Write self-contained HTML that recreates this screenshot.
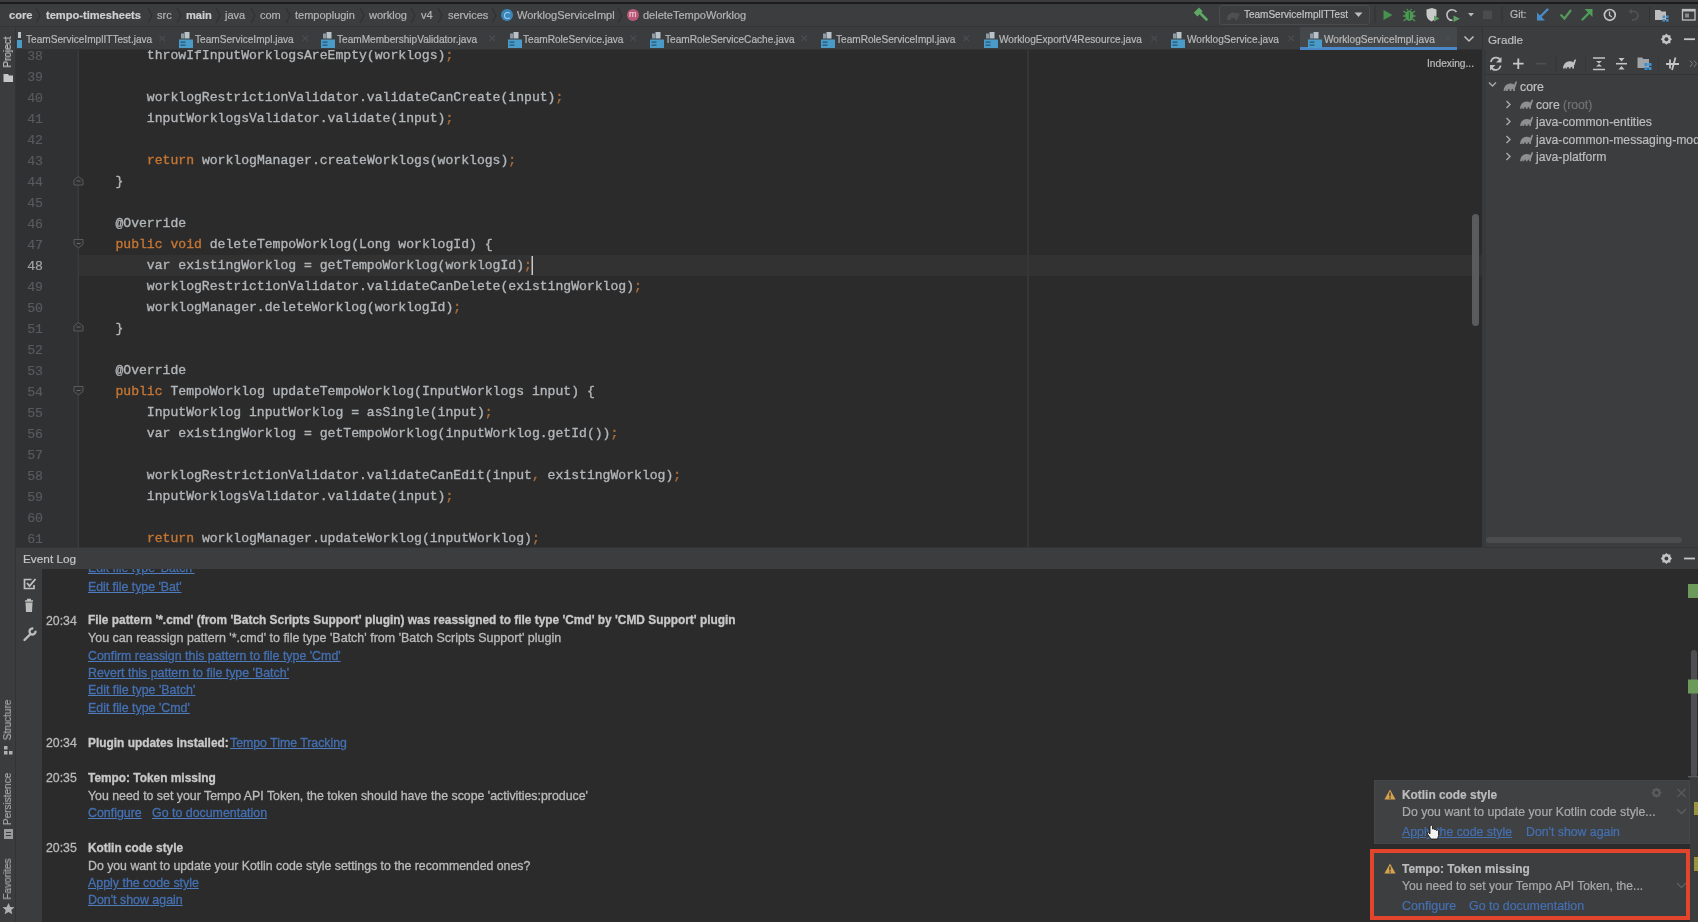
<!DOCTYPE html><html><head><meta charset="utf-8"><style>
*{margin:0;padding:0;box-sizing:border-box}
html,body{width:1698px;height:922px;overflow:hidden;background:#2b2b2b;font-family:"Liberation Sans",sans-serif;-webkit-font-smoothing:antialiased}
.t,.code{will-change:transform}
.a{position:absolute}
.t{position:absolute;white-space:pre;line-height:1;-webkit-text-stroke:0.2px currentColor}
#top{left:0;top:0;width:1698px;height:4px;background:#1c1c1d;border-top:2px solid #3c3c3e}
#nav{left:0;top:4px;width:1698px;height:23px;background:#3c3d3f;border-bottom:1px solid #343537}
#tabs{left:16px;top:27px;width:1466px;height:23px;background:#3b3c3e;border-bottom:1px solid #323335}
#lstripe{left:0;top:27px;width:16px;height:895px;background:#3b3c3e;border-right:1px solid #333436}
#gutter{left:16px;top:50px;width:62px;height:498px;background:#303133}
#editor{left:78px;top:50px;width:1404px;height:498px;background:#2b2b2b}
#gradle{left:1482px;top:27px;width:216px;height:521px;background:#3c3d3f;border-left:1px solid #333436}
#elhead{left:16px;top:547px;width:1682px;height:23px;background:#3c3d3f;border-top:1px solid #333436}
#eltool{left:16px;top:569px;width:26px;height:353px;background:#3b3c3e}
#elcontent{left:42px;top:569px;width:1656px;height:353px;background:#2b2b2b}
.code{font-family:"Liberation Mono",monospace;font-size:13.1px;color:#b3b6b9;-webkit-text-stroke:0.35px currentColor}
.ln{font-family:"Liberation Mono",monospace;font-size:13.2px;color:#5d5f62;text-align:right;width:40px}
.kw{color:#c57634}
.sc{color:#a86c3c}
.ui{font-size:11px;color:#bbbbbb}
</style></head><body>
<div id="top" class="a"></div>
<div id="nav" class="a"></div>
<div id="tabs" class="a"></div>
<div id="lstripe" class="a"></div>
<div id="gutter" class="a"></div>
<div id="editor" class="a"></div>
<div id="gradle" class="a"></div>
<div id="elhead" class="a"></div>
<div id="eltool" class="a"></div>
<div id="elcontent" class="a"></div>
<div class="a" style="left:78px;top:255px;width:1404px;height:20.5px;background:#323232"></div>
<div class="a" style="left:1027px;top:50px;width:2px;height:498px;background:#363637"></div>
<div class="a" style="left:16px;top:50px;width:1466px;height:498px;overflow:hidden">
<div class="t ln" style="left:-13px;top:-0.5px;color:#585a5d">38</div>
<div class="t code" style="left:68px;top:-1px">        throwIfInputWorklogsAreEmpty(worklogs)<span class="sc">;</span></div>
<div class="t ln" style="left:-13px;top:20.5px;color:#585a5d">39</div>
<div class="t ln" style="left:-13px;top:41.5px;color:#585a5d">40</div>
<div class="t code" style="left:68px;top:41px">        worklogRestrictionValidator.validateCanCreate(input)<span class="sc">;</span></div>
<div class="t ln" style="left:-13px;top:62.5px;color:#585a5d">41</div>
<div class="t code" style="left:68px;top:62px">        inputWorklogsValidator.validate(input)<span class="sc">;</span></div>
<div class="t ln" style="left:-13px;top:83.5px;color:#585a5d">42</div>
<div class="t ln" style="left:-13px;top:104.5px;color:#585a5d">43</div>
<div class="t code" style="left:68px;top:104px">        <span class="kw">return</span> worklogManager.createWorklogs(worklogs)<span class="sc">;</span></div>
<div class="t ln" style="left:-13px;top:125.5px;color:#585a5d">44</div>
<div class="t code" style="left:68px;top:125px">    }</div>
<div class="t ln" style="left:-13px;top:146.5px;color:#585a5d">45</div>
<div class="t ln" style="left:-13px;top:167.5px;color:#585a5d">46</div>
<div class="t code" style="left:68px;top:167px">    @Override</div>
<div class="t ln" style="left:-13px;top:188.5px;color:#585a5d">47</div>
<div class="t code" style="left:68px;top:188px">    <span class="kw">public void</span> deleteTempoWorklog(Long worklogId) {</div>
<div class="t ln" style="left:-13px;top:209.5px;color:#a4a3a3">48</div>
<div class="t code" style="left:68px;top:209px">        var existingWorklog = getTempoWorklog(worklogId)<span class="sc">;</span></div>
<div class="t ln" style="left:-13px;top:230.5px;color:#585a5d">49</div>
<div class="t code" style="left:68px;top:230px">        worklogRestrictionValidator.validateCanDelete(existingWorklog)<span class="sc">;</span></div>
<div class="t ln" style="left:-13px;top:251.5px;color:#585a5d">50</div>
<div class="t code" style="left:68px;top:251px">        worklogManager.deleteWorklog(worklogId)<span class="sc">;</span></div>
<div class="t ln" style="left:-13px;top:272.5px;color:#585a5d">51</div>
<div class="t code" style="left:68px;top:272px">    }</div>
<div class="t ln" style="left:-13px;top:293.5px;color:#585a5d">52</div>
<div class="t ln" style="left:-13px;top:314.5px;color:#585a5d">53</div>
<div class="t code" style="left:68px;top:314px">    @Override</div>
<div class="t ln" style="left:-13px;top:335.5px;color:#585a5d">54</div>
<div class="t code" style="left:68px;top:335px">    <span class="kw">public</span> TempoWorklog updateTempoWorklog(InputWorklogs input) {</div>
<div class="t ln" style="left:-13px;top:356.5px;color:#585a5d">55</div>
<div class="t code" style="left:68px;top:356px">        InputWorklog inputWorklog = asSingle(input)<span class="sc">;</span></div>
<div class="t ln" style="left:-13px;top:377.5px;color:#585a5d">56</div>
<div class="t code" style="left:68px;top:377px">        var existingWorklog = getTempoWorklog(inputWorklog.getId())<span class="sc">;</span></div>
<div class="t ln" style="left:-13px;top:398.5px;color:#585a5d">57</div>
<div class="t ln" style="left:-13px;top:419.5px;color:#585a5d">58</div>
<div class="t code" style="left:68px;top:419px">        worklogRestrictionValidator.validateCanEdit(input<span class="sc">,</span> existingWorklog)<span class="sc">;</span></div>
<div class="t ln" style="left:-13px;top:440.5px;color:#585a5d">59</div>
<div class="t code" style="left:68px;top:440px">        inputWorklogsValidator.validate(input)<span class="sc">;</span></div>
<div class="t ln" style="left:-13px;top:461.5px;color:#585a5d">60</div>
<div class="t ln" style="left:-13px;top:482.5px;color:#585a5d">61</div>
<div class="t code" style="left:68px;top:482px">        <span class="kw">return</span> worklogManager.updateWorklog(inputWorklog)<span class="sc">;</span></div>
</div>
<div class="t" style="left:8.5px;top:9.62px;font-size:11.1px;color:#cfcfcf;font-weight:bold;">core</div>
<div class="t" style="left:45.5px;top:9.62px;font-size:11.1px;color:#cfcfcf;font-weight:bold;">tempo-timesheets</div>
<div class="t" style="left:156.5px;top:9.68px;font-size:11.0px;color:#b4b4b4;">src</div>
<div class="t" style="left:185.5px;top:9.62px;font-size:11.1px;color:#cfcfcf;font-weight:bold;">main</div>
<div class="t" style="left:224.5px;top:9.68px;font-size:11.0px;color:#b4b4b4;">java</div>
<div class="t" style="left:259.5px;top:9.68px;font-size:11.0px;color:#b4b4b4;">com</div>
<div class="t" style="left:294.5px;top:9.68px;font-size:11.0px;color:#b4b4b4;">tempoplugin</div>
<div class="t" style="left:368.5px;top:9.68px;font-size:11.0px;color:#b4b4b4;">worklog</div>
<div class="t" style="left:420.5px;top:9.68px;font-size:11.0px;color:#b4b4b4;">v4</div>
<div class="t" style="left:447.5px;top:9.68px;font-size:11.0px;color:#b4b4b4;">services</div>
<div class="t" style="left:516.5px;top:9.68px;font-size:11.0px;color:#b4b4b4;">WorklogServiceImpl</div>
<div class="t" style="left:642.5px;top:9.68px;font-size:11.0px;color:#b4b4b4;">deleteTempoWorklog</div>
<svg class="a" style="left:35px;top:7px" width="6" height="17"><path d="M1 1 L5 8.5 L1 16" stroke="#303133" stroke-width="1.2" fill="none"/></svg>
<svg class="a" style="left:147px;top:7px" width="6" height="17"><path d="M1 1 L5 8.5 L1 16" stroke="#303133" stroke-width="1.2" fill="none"/></svg>
<svg class="a" style="left:176px;top:7px" width="6" height="17"><path d="M1 1 L5 8.5 L1 16" stroke="#303133" stroke-width="1.2" fill="none"/></svg>
<svg class="a" style="left:215px;top:7px" width="6" height="17"><path d="M1 1 L5 8.5 L1 16" stroke="#303133" stroke-width="1.2" fill="none"/></svg>
<svg class="a" style="left:250px;top:7px" width="6" height="17"><path d="M1 1 L5 8.5 L1 16" stroke="#303133" stroke-width="1.2" fill="none"/></svg>
<svg class="a" style="left:285px;top:7px" width="6" height="17"><path d="M1 1 L5 8.5 L1 16" stroke="#303133" stroke-width="1.2" fill="none"/></svg>
<svg class="a" style="left:359px;top:7px" width="6" height="17"><path d="M1 1 L5 8.5 L1 16" stroke="#303133" stroke-width="1.2" fill="none"/></svg>
<svg class="a" style="left:410px;top:7px" width="6" height="17"><path d="M1 1 L5 8.5 L1 16" stroke="#303133" stroke-width="1.2" fill="none"/></svg>
<svg class="a" style="left:437px;top:7px" width="6" height="17"><path d="M1 1 L5 8.5 L1 16" stroke="#303133" stroke-width="1.2" fill="none"/></svg>
<svg class="a" style="left:491px;top:7px" width="6" height="17"><path d="M1 1 L5 8.5 L1 16" stroke="#303133" stroke-width="1.2" fill="none"/></svg>
<svg class="a" style="left:617px;top:7px" width="6" height="17"><path d="M1 1 L5 8.5 L1 16" stroke="#303133" stroke-width="1.2" fill="none"/></svg>
<div class="a" style="left:501px;top:9px;width:12px;height:12px;border-radius:50%;background:#3a86b8"></div>
<div class="a" style="left:503.5px;top:11.5px;width:7px;height:7px;border-radius:50%;border:1.6px solid #9fd0ee;border-right-color:transparent"></div>
<div class="a" style="left:627px;top:9px;width:12px;height:12px;border-radius:50%;background:#b95777"></div>
<div class="t" style="left:629.3px;top:10.2px;font-size:9px;color:#f0c8d4">m</div>
<div class="a" style="left:1300px;top:27px;width:157px;height:21px;background:#45484b"></div>
<div class="a" style="left:1300px;top:47px;width:157px;height:3px;background:#4a87c6"></div>
<div class="t" style="left:26px;top:35.24px;font-size:10.1px;color:#b9b9b9;">TeamServiceImplITTest.java</div>
<div class="t" style="left:158px;top:34px;font-size:10px;color:#4c4e51">&#x2715;</div>
<svg class="a" style="left:178px;top:31px" width="16" height="18" viewBox="0 0 16 18"><rect x="3" y="2.5" width="3" height="5" fill="#8d9aa3"/><rect x="6.5" y="1" width="5" height="6.5" fill="#b9c2c8"/><rect x="1" y="8.5" width="14" height="8.5" fill="#4b9bc8"/><rect x="2.5" y="10.5" width="5" height="1.3" fill="#235a7a"/><rect x="2.5" y="13.5" width="5" height="1.3" fill="#235a7a"/></svg>
<div class="t" style="left:195px;top:35.24px;font-size:10.1px;color:#b9b9b9;">TeamServiceImpl.java</div>
<div class="t" style="left:301px;top:34px;font-size:10px;color:#4c4e51">&#x2715;</div>
<svg class="a" style="left:320px;top:31px" width="16" height="18" viewBox="0 0 16 18"><rect x="3" y="2.5" width="3" height="5" fill="#8d9aa3"/><rect x="6.5" y="1" width="5" height="6.5" fill="#b9c2c8"/><rect x="1" y="8.5" width="14" height="8.5" fill="#4b9bc8"/><rect x="2.5" y="10.5" width="5" height="1.3" fill="#235a7a"/><rect x="2.5" y="13.5" width="5" height="1.3" fill="#235a7a"/></svg>
<div class="t" style="left:337px;top:35.24px;font-size:10.1px;color:#b9b9b9;">TeamMembershipValidator.java</div>
<div class="t" style="left:488px;top:34px;font-size:10px;color:#4c4e51">&#x2715;</div>
<svg class="a" style="left:507px;top:31px" width="16" height="18" viewBox="0 0 16 18"><rect x="3" y="2.5" width="3" height="5" fill="#8d9aa3"/><rect x="6.5" y="1" width="5" height="6.5" fill="#b9c2c8"/><rect x="1" y="8.5" width="14" height="8.5" fill="#4b9bc8"/><rect x="2.5" y="10.5" width="5" height="1.3" fill="#235a7a"/><rect x="2.5" y="13.5" width="5" height="1.3" fill="#235a7a"/></svg>
<div class="t" style="left:523px;top:35.24px;font-size:10.1px;color:#b9b9b9;">TeamRoleService.java</div>
<div class="t" style="left:629px;top:34px;font-size:10px;color:#4c4e51">&#x2715;</div>
<svg class="a" style="left:649px;top:31px" width="16" height="18" viewBox="0 0 16 18"><rect x="3" y="2.5" width="3" height="5" fill="#8d9aa3"/><rect x="6.5" y="1" width="5" height="6.5" fill="#b9c2c8"/><rect x="1" y="8.5" width="14" height="8.5" fill="#4b9bc8"/><rect x="2.5" y="10.5" width="5" height="1.3" fill="#235a7a"/><rect x="2.5" y="13.5" width="5" height="1.3" fill="#235a7a"/></svg>
<div class="t" style="left:665px;top:35.24px;font-size:10.1px;color:#b9b9b9;">TeamRoleServiceCache.java</div>
<div class="t" style="left:800px;top:34px;font-size:10px;color:#4c4e51">&#x2715;</div>
<svg class="a" style="left:820px;top:31px" width="16" height="18" viewBox="0 0 16 18"><rect x="3" y="2.5" width="3" height="5" fill="#8d9aa3"/><rect x="6.5" y="1" width="5" height="6.5" fill="#b9c2c8"/><rect x="1" y="8.5" width="14" height="8.5" fill="#4b9bc8"/><rect x="2.5" y="10.5" width="5" height="1.3" fill="#235a7a"/><rect x="2.5" y="13.5" width="5" height="1.3" fill="#235a7a"/></svg>
<div class="t" style="left:836px;top:35.24px;font-size:10.1px;color:#b9b9b9;">TeamRoleServiceImpl.java</div>
<div class="t" style="left:962px;top:34px;font-size:10px;color:#4c4e51">&#x2715;</div>
<svg class="a" style="left:983px;top:31px" width="16" height="18" viewBox="0 0 16 18"><rect x="3" y="2.5" width="3" height="5" fill="#8d9aa3"/><rect x="6.5" y="1" width="5" height="6.5" fill="#b9c2c8"/><rect x="1" y="8.5" width="14" height="8.5" fill="#4b9bc8"/><rect x="2.5" y="10.5" width="5" height="1.3" fill="#235a7a"/><rect x="2.5" y="13.5" width="5" height="1.3" fill="#235a7a"/></svg>
<div class="t" style="left:999px;top:35.24px;font-size:10.1px;color:#b9b9b9;">WorklogExportV4Resource.java</div>
<div class="t" style="left:1150px;top:34px;font-size:10px;color:#4c4e51">&#x2715;</div>
<svg class="a" style="left:1170px;top:31px" width="16" height="18" viewBox="0 0 16 18"><rect x="3" y="2.5" width="3" height="5" fill="#8d9aa3"/><rect x="6.5" y="1" width="5" height="6.5" fill="#b9c2c8"/><rect x="1" y="8.5" width="14" height="8.5" fill="#4b9bc8"/><rect x="2.5" y="10.5" width="5" height="1.3" fill="#235a7a"/><rect x="2.5" y="13.5" width="5" height="1.3" fill="#235a7a"/></svg>
<div class="t" style="left:1187px;top:35.24px;font-size:10.1px;color:#b9b9b9;">WorklogService.java</div>
<div class="t" style="left:1287px;top:34px;font-size:10px;color:#4c4e51">&#x2715;</div>
<svg class="a" style="left:1307px;top:31px" width="16" height="18" viewBox="0 0 16 18"><rect x="3" y="2.5" width="3" height="5" fill="#8d9aa3"/><rect x="6.5" y="1" width="5" height="6.5" fill="#b9c2c8"/><rect x="1" y="8.5" width="14" height="8.5" fill="#4b9bc8"/><rect x="2.5" y="10.5" width="5" height="1.3" fill="#235a7a"/><rect x="2.5" y="13.5" width="5" height="1.3" fill="#235a7a"/></svg>
<div class="t" style="left:1324px;top:35.24px;font-size:10.1px;color:#b9b9b9;">WorklogServiceImpl.java</div>
<div class="t" style="left:1444px;top:34px;font-size:10px;color:#4c4e51">&#x2715;</div>
<div class="a" style="left:18px;top:32px;width:3px;height:6px;background:#b9c2c8"></div><div class="a" style="left:17px;top:39.5px;width:5px;height:8.5px;background:#4b9bc8"></div>
<svg class="a" style="left:1463px;top:34px" width="12" height="10"><path d="M1.5 2.5 L6 7 L10.5 2.5" stroke="#c0c0c0" stroke-width="1.5" fill="none"/></svg>
<div class="a" style="left:1219px;top:5px;width:151px;height:20px;border:1px solid #4a4b4d;border-radius:3px;background:#3d3e40"></div>
<div class="t" style="left:1243.5px;top:9.80px;font-size:10.0px;color:#c4c4c4;">TeamServiceImplITTest</div>
<svg class="a" style="left:1354px;top:12px" width="9" height="6"><path d="M0.5 0.5 L8.5 0.5 L4.5 5z" fill="#bdbdbd"/></svg>
<div class="t" style="left:1510px;top:9.49px;font-size:10.5px;color:#b8b8b8;">Git:</div>
<div class="t" style="left:1488px;top:34.25px;font-size:11.7px;color:#bdbdbd;">Gradle</div>
<div class="a" style="left:1486px;top:74px;width:212px;height:1px;background:#323335"></div>
<div class="a" style="left:1482px;top:50px;width:4px;height:498px;background:#38393b"></div>
<svg class="a" style="left:1488px;top:81px" width="9" height="7"><path d="M1 1.5 L4.5 5 L8 1.5" stroke="#aaaaaa" stroke-width="1.4" fill="none"/></svg>
<div class="t" style="left:1520px;top:81.17px;font-size:12.3px;color:#c0c0c0;">core</div>
<svg class="a" style="left:1505px;top:99.8px" width="7" height="9"><path d="M1.5 1 L5 4.5 L1.5 8" stroke="#aaaaaa" stroke-width="1.4" fill="none"/></svg>
<div class="t" style="left:1536px;top:98.74px;font-size:12.2px;color:#bdbdbd;">core <span style="color:#727375">(root)</span></div>
<svg class="a" style="left:1505px;top:117.1px" width="7" height="9"><path d="M1.5 1 L5 4.5 L1.5 8" stroke="#aaaaaa" stroke-width="1.4" fill="none"/></svg>
<div class="t" style="left:1536px;top:116.04px;font-size:12.2px;color:#bdbdbd;">java-common-entities</div>
<svg class="a" style="left:1505px;top:135.0px" width="7" height="9"><path d="M1.5 1 L5 4.5 L1.5 8" stroke="#aaaaaa" stroke-width="1.4" fill="none"/></svg>
<div class="t" style="left:1536px;top:133.94px;font-size:12.2px;color:#bdbdbd;">java-common-messaging-module</div>
<svg class="a" style="left:1505px;top:152.3px" width="7" height="9"><path d="M1.5 1 L5 4.5 L1.5 8" stroke="#aaaaaa" stroke-width="1.4" fill="none"/></svg>
<div class="t" style="left:1536px;top:151.24px;font-size:12.2px;color:#bdbdbd;">java-platform</div>
<div class="a" style="left:1486px;top:537px;width:196px;height:6px;border-radius:3px;background:#4b4c4e"></div>
<div class="t" style="left:1427px;top:59.18px;font-size:10.2px;color:#bdbdbd;">Indexing...</div>
<div class="a" style="left:1472px;top:214px;width:7px;height:112px;border-radius:4px;background:#5a5b5d"></div>
<div class="t" style="left:22.5px;top:554.28px;font-size:11.8px;color:#c5c5c5;">Event Log</div>
<div class="a" style="left:42px;top:569px;width:1646px;height:353px;overflow:hidden">
<div class="t" style="left:46px;top:-7.23px;font-size:12.3px;color:#4470b2;-webkit-text-stroke:0.3px currentColor;text-decoration:underline;text-underline-offset:1px;text-decoration-color:#4f7cbc;">Edit file type 'Batch'</div>
<div class="t" style="left:46px;top:11.77px;font-size:12.3px;color:#4470b2;-webkit-text-stroke:0.3px currentColor;text-decoration:underline;text-underline-offset:1px;text-decoration-color:#4f7cbc;">Edit file type 'Bat'</div>
<div class="t" style="left:4px;top:45.87px;font-size:12.3px;color:#b9b9b9;-webkit-text-stroke:0.3px currentColor;">20:34</div>
<div class="t" style="left:46px;top:46.12px;font-size:11.9px;color:#c8c8c8;-webkit-text-stroke:0.3px currentColor;font-weight:bold;">File pattern '*.cmd' (from 'Batch Scripts Support' plugin) was reassigned to file type 'Cmd' by 'CMD Support' plugin</div>
<div class="t" style="left:46px;top:63.25px;font-size:12.5px;color:#bbbbbb;-webkit-text-stroke:0.3px currentColor;">You can reassign pattern '*.cmd' to file type 'Batch' from 'Batch Scripts Support' plugin</div>
<div class="t" style="left:46px;top:81.21px;font-size:12.4px;color:#4470b2;-webkit-text-stroke:0.3px currentColor;text-decoration:underline;text-underline-offset:1px;text-decoration-color:#4f7cbc;">Confirm reassign this pattern to file type 'Cmd'</div>
<div class="t" style="left:46px;top:98.21px;font-size:12.4px;color:#4470b2;-webkit-text-stroke:0.3px currentColor;text-decoration:underline;text-underline-offset:1px;text-decoration-color:#4f7cbc;">Revert this pattern to file type 'Batch'</div>
<div class="t" style="left:46px;top:115.21px;font-size:12.4px;color:#4470b2;-webkit-text-stroke:0.3px currentColor;text-decoration:underline;text-underline-offset:1px;text-decoration-color:#4f7cbc;">Edit file type 'Batch'</div>
<div class="t" style="left:46px;top:132.71px;font-size:12.4px;color:#4470b2;-webkit-text-stroke:0.3px currentColor;text-decoration:underline;text-underline-offset:1px;text-decoration-color:#4f7cbc;">Edit file type 'Cmd'</div>
<div class="t" style="left:4px;top:168.37px;font-size:12.3px;color:#b9b9b9;-webkit-text-stroke:0.3px currentColor;">20:34</div>
<div class="t" style="left:46px;top:168.62px;font-size:11.9px;color:#c8c8c8;-webkit-text-stroke:0.3px currentColor;font-weight:bold;">Plugin updates installed: </div>
<div class="t" style="left:187.5px;top:167.77px;font-size:12.3px;color:#4470b2;-webkit-text-stroke:0.3px currentColor;text-decoration:underline;text-underline-offset:1px;text-decoration-color:#4f7cbc;">Tempo Time Tracking</div>
<div class="t" style="left:4px;top:203.37px;font-size:12.3px;color:#b9b9b9;-webkit-text-stroke:0.3px currentColor;">20:35</div>
<div class="t" style="left:46px;top:203.62px;font-size:11.9px;color:#c8c8c8;-webkit-text-stroke:0.3px currentColor;font-weight:bold;">Tempo: Token missing</div>
<div class="t" style="left:46px;top:220.84px;font-size:12.35px;color:#bbbbbb;-webkit-text-stroke:0.3px currentColor;">You need to set your Tempo API Token, the token should have the scope 'activities:produce'</div>
<div class="t" style="left:46px;top:237.71px;font-size:12.4px;color:#4470b2;-webkit-text-stroke:0.3px currentColor;text-decoration:underline;text-underline-offset:1px;text-decoration-color:#4f7cbc;">Configure</div>
<div class="t" style="left:109.5px;top:237.71px;font-size:12.4px;color:#4470b2;-webkit-text-stroke:0.3px currentColor;text-decoration:underline;text-underline-offset:1px;text-decoration-color:#4f7cbc;">Go to documentation</div>
<div class="t" style="left:4px;top:273.37px;font-size:12.3px;color:#b9b9b9;-webkit-text-stroke:0.3px currentColor;">20:35</div>
<div class="t" style="left:46px;top:273.62px;font-size:11.9px;color:#c8c8c8;-webkit-text-stroke:0.3px currentColor;font-weight:bold;">Kotlin code style</div>
<div class="t" style="left:46px;top:290.87px;font-size:12.3px;color:#bbbbbb;-webkit-text-stroke:0.3px currentColor;">Do you want to update your Kotlin code style settings to the recommended ones?</div>
<div class="t" style="left:46px;top:307.71px;font-size:12.4px;color:#4470b2;-webkit-text-stroke:0.3px currentColor;text-decoration:underline;text-underline-offset:1px;text-decoration-color:#4f7cbc;">Apply the code style</div>
<div class="t" style="left:46px;top:325.21px;font-size:12.4px;color:#4470b2;-webkit-text-stroke:0.3px currentColor;text-decoration:underline;text-underline-offset:1px;text-decoration-color:#4f7cbc;">Don't show again</div>
</div>
<div class="a" style="left:1374px;top:780px;width:316px;height:64px;background:#404143;border:1px solid #454648"></div>
<div class="a" style="left:1370px;top:849px;width:320px;height:71px;border:4px solid #e2452b;background:#3d3e40"></div>
<svg class="a" style="left:1384px;top:789px" width="12" height="11" viewBox="0 0 12 11"><path d="M6 0.5 L11.6 10.5 L0.4 10.5z" fill="#d6a24a"/><rect x="5.3" y="3.5" width="1.4" height="4" fill="#3a3a3a"/><rect x="5.3" y="8.3" width="1.4" height="1.3" fill="#3a3a3a"/></svg>
<svg class="a" style="left:1384px;top:863px" width="12" height="11" viewBox="0 0 12 11"><path d="M6 0.5 L11.6 10.5 L0.4 10.5z" fill="#d6a24a"/><rect x="5.3" y="3.5" width="1.4" height="4" fill="#3a3a3a"/><rect x="5.3" y="8.3" width="1.4" height="1.3" fill="#3a3a3a"/></svg>
<div class="t" style="left:1402px;top:789.62px;font-size:11.9px;color:#bcbcbc;font-weight:bold;">Kotlin code style</div>
<div class="t" style="left:1402px;top:806.37px;font-size:12.3px;color:#aaaaaa;">Do you want to update your Kotlin code style...</div>
<div class="t" style="left:1402px;top:825.87px;font-size:12.3px;color:#4470b2;text-decoration:underline;">Apply the code style</div>
<div class="t" style="left:1526px;top:825.87px;font-size:12.3px;color:#4470b2;">Don't show again</div>
<div class="t" style="left:1402px;top:863.62px;font-size:11.9px;color:#bcbcbc;font-weight:bold;">Tempo: Token missing</div>
<div class="t" style="left:1402px;top:880.00px;font-size:12.1px;color:#aaaaaa;">You need to set your Tempo API Token, the...</div>
<div class="t" style="left:1402px;top:899.75px;font-size:12.5px;color:#4470b2;">Configure</div>
<div class="t" style="left:1469px;top:899.81px;font-size:12.4px;color:#4470b2;">Go to documentation</div>
<svg class="a" style="left:0;top:0" width="1698" height="922"><path d="M1206.5 19.5 L1199.5 12.5" stroke="#5fa866" stroke-width="2.6" stroke-linecap="round"/><path d="M1193.8 12.8 L1199 7.6 L1202.6 11.2 L1197.4 16.4z" fill="#5fa866"/><path d="M1227 20 Q1227 13 1233 12.5 Q1237 12.5 1238 14 L1239 12 L1239.5 15 Q1238 17 1237 20 L1235 20 L1235 18 L1231 18 L1231 20z" fill="#4f5052"/><path d="M1383.5 10 L1392.5 15 L1383.5 20z" fill="#46924f"/><ellipse cx="1409.3" cy="15.6" rx="4.2" ry="5.2" fill="#4c9a54"/><path d="M1403.5 11 L1406 13 M1415 11 L1412.5 13 M1403 16 L1405.5 16 M1415.5 16 L1413 16 M1403.5 21 L1406 19 M1415 21 L1412.5 19 M1407 9 L1408 10.5 M1411.5 9 L1410.5 10.5" stroke="#4c9a54" stroke-width="1.3"/><path d="M1409.3 12 L1409.3 19" stroke="#2f5a33" stroke-width="1"/><path d="M1426.5 9.5 L1432 8 L1436.5 9.5 L1436.5 15 Q1436 19.5 1431.5 21.5 Q1427 19.5 1426.5 15z" fill="#c9c9c9"/><path d="M1432 8 L1432 21.5" stroke="#555" stroke-width="0"/><path d="M1434 15.5 L1439.5 18.5 L1434 21.5z" fill="#5e9f63"/><path d="M1456.5 12 A5.3 5.3 0 1 0 1452.5 20.3" stroke="#c0c0c0" stroke-width="1.6" fill="none"/><path d="M1453.5 15.5 L1460 18.8 L1453.5 22z" fill="#5e9f63"/><path d="M1468 13 L1474 13 L1471 16.5z" fill="#b9b9b9"/><rect x="1483" y="10.5" width="9" height="8.5" fill="#4b4c4e"/><rect x="1501.5" y="6" width="1" height="17" fill="#323335"/><rect x="1649" y="6" width="1" height="17" fill="#323335"/><rect x="1374.5" y="6" width="1" height="17" fill="#323335"/><path d="M1547.5 9.5 L1539 18" stroke="#4a8cc8" stroke-width="2.4" stroke-linecap="round"/><path d="M1537 12.5 L1537 20.5 L1545 20.5z" fill="#4a8cc8"/><path d="M1560.5 14.5 L1564.5 18.5 L1571 10" stroke="#56985c" stroke-width="2.2" fill="none"/><path d="M1582.5 19.5 L1590 12" stroke="#4f9d57" stroke-width="2.4" stroke-linecap="round"/><path d="M1584.5 9 L1592.5 9 L1592.5 17z" fill="#4f9d57"/><circle cx="1609.8" cy="14.9" r="5.4" stroke="#c4c4c4" stroke-width="1.7" fill="none"/><path d="M1609.5 11.5 L1609.5 15.2 L1611.8 17" stroke="#c4c4c4" stroke-width="1.3" fill="none"/><path d="M1630 11.5 Q1638 10.5 1638 15.5 Q1638 20 1632 20" stroke="#505153" stroke-width="1.8" fill="none"/><path d="M1628 11.5 L1632 9 L1632 14z" fill="#505153"/><path d="M1655 10 L1660 10 L1661.5 11.5 L1666 11.5 L1666 20 L1655 20z" fill="#bdbdbd"/><rect x="1662.5" y="15.5" width="2.6" height="2.6" fill="#4a8fc4"/><rect x="1666" y="15.5" width="2.6" height="2.6" fill="#4a8fc4"/><rect x="1662.5" y="19" width="2.6" height="2.6" fill="#4a8fc4"/><rect x="1666" y="19" width="2.6" height="2.6" fill="#4a8fc4"/><rect x="1682.5" y="9.5" width="12.5" height="10.5" stroke="#c0c0c0" stroke-width="1.3" fill="none"/><rect x="1682.5" y="9.5" width="12.5" height="2" fill="#c0c0c0"/><rect x="1685" y="13.5" width="4" height="4" fill="#8a8a8a"/><path d="M3.5 74 L8 74 L9 75.5 L13 75.5 L13 82 L3.5 82z" fill="#c6c6c6"/><rect x="4" y="746" width="3.5" height="3.5" fill="#b0b0b0"/><rect x="4" y="751" width="3.5" height="3.5" fill="#b0b0b0"/><rect x="9" y="751" width="3.5" height="3.5" fill="#b0b0b0"/><rect x="4" y="829" width="9" height="10" fill="#9a9a9a"/><rect x="6" y="832" width="5" height="1" fill="#3b3c3e"/><rect x="6" y="835" width="5" height="1" fill="#3b3c3e"/><path d="M8.5 903 L10.3 907 L14.5 907.3 L11.3 910 L12.3 914.2 L8.5 912 L4.7 914.2 L5.7 910 L2.5 907.3 L6.7 907z" fill="#b0b0b0"/><polygon points="1672.00,39.20 1670.44,40.87 1670.36,43.16 1668.07,43.24 1666.40,44.80 1664.73,43.24 1662.44,43.16 1662.36,40.87 1660.80,39.20 1662.36,37.53 1662.44,35.24 1664.73,35.16 1666.40,33.60 1668.07,35.16 1670.36,35.24 1670.44,37.53" fill="#c4c4c4"/><circle cx="1666.4" cy="39.2" r="1.96" fill="#3c3d3f"/><rect x="1684" y="38.3" width="11" height="1.8" fill="#c4c4c4"/><polygon points="1672.00,558.50 1670.44,560.17 1670.36,562.46 1668.07,562.54 1666.40,564.10 1664.73,562.54 1662.44,562.46 1662.36,560.17 1660.80,558.50 1662.36,556.83 1662.44,554.54 1664.73,554.46 1666.40,552.90 1668.07,554.46 1670.36,554.54 1670.44,556.83" fill="#c4c4c4"/><circle cx="1666.4" cy="558.5" r="1.96" fill="#3c3d3f"/><rect x="1684" y="557.6" width="11" height="1.8" fill="#c4c4c4"/><path d="M1500.5 60.5 A5 5 0 0 0 1491 62" stroke="#c0c0c0" stroke-width="1.8" fill="none"/><path d="M1501.5 57 L1501.5 62.5 L1496 62.5z" fill="#c0c0c0"/><path d="M1491 67 A5 5 0 0 0 1500.5 65.5" stroke="#c0c0c0" stroke-width="1.8" fill="none"/><path d="M1490 70.5 L1490 65 L1495.5 65z" fill="#c0c0c0"/><path d="M1513 63.7 L1523.6 63.7 M1518.3 58.5 L1518.3 69" stroke="#c8c8c8" stroke-width="1.8"/><path d="M1536 63.7 L1546 63.7" stroke="#4e4f51" stroke-width="1.6"/><rect x="1555.5" y="56" width="1" height="16" fill="#36373a"/><rect x="1585" y="56" width="1" height="16" fill="#36373a"/><rect x="1658" y="56" width="1" height="16" fill="#36373a"/><g transform="translate(1563,58.5) scale(1.000)"><path d="M0 10 Q0.5 3.5 6 2.8 Q9 2.6 10.3 4 Q10.8 1 12.5 0.5 Q13.5 1.5 12.2 4 Q12 6 11 7 L11 10 L9.2 10 L9.2 8 Q8.5 8.5 7.6 8.6 L7.6 10 L5.8 10 L5.8 8.4 L4.2 8.4 L4.2 10 L2.4 10 L2.4 8.2 L1.6 10z" fill="#c0c0c0"/></g><path d="M1593 58 L1605 58 M1593 69.5 L1605 69.5" stroke="#c4c4c4" stroke-width="1.6"/><path d="M1596 61 L1602 61 L1599 63.5z M1596 66.5 L1602 66.5 L1599 64z" fill="#c4c4c4"/><path d="M1616 63.7 L1627 63.7" stroke="#c4c4c4" stroke-width="1.6"/><path d="M1618.5 58 L1624.5 58 L1621.5 61.5z M1618.5 69.5 L1624.5 69.5 L1621.5 66z" fill="#c4c4c4"/><path d="M1637.5 57.5 L1642 57.5 L1643.5 59 L1649 59 L1649 68 L1637.5 68z" fill="#9ea4a8"/><rect x="1644.5" y="63" width="3" height="3" fill="#3a8fd0"/><rect x="1648.5" y="63" width="3" height="3" fill="#3a8fd0"/><rect x="1644.5" y="67" width="3" height="3" fill="#3a8fd0"/><rect x="1648.5" y="67" width="3" height="3" fill="#3a8fd0"/><path d="M1666 64 L1679 64 M1670 59.5 L1670 68.5 M1675.5 57.5 L1672 70" stroke="#c6c6c6" stroke-width="1.8"/><path d="M1690 60.5 L1692.5 63.7 L1690 67 M1694 60.5 L1696.5 63.7 L1694 67" stroke="#7a7b7d" stroke-width="1" fill="none"/><g transform="translate(1503.5,80.5) scale(1.038)"><path d="M0 10 Q0.5 3.5 6 2.8 Q9 2.6 10.3 4 Q10.8 1 12.5 0.5 Q13.5 1.5 12.2 4 Q12 6 11 7 L11 10 L9.2 10 L9.2 8 Q8.5 8.5 7.6 8.6 L7.6 10 L5.8 10 L5.8 8.4 L4.2 8.4 L4.2 10 L2.4 10 L2.4 8.2 L1.6 10z" fill="#8e8f91"/></g><g transform="translate(1520,98.8) scale(1.000)"><path d="M0 10 Q0.5 3.5 6 2.8 Q9 2.6 10.3 4 Q10.8 1 12.5 0.5 Q13.5 1.5 12.2 4 Q12 6 11 7 L11 10 L9.2 10 L9.2 8 Q8.5 8.5 7.6 8.6 L7.6 10 L5.8 10 L5.8 8.4 L4.2 8.4 L4.2 10 L2.4 10 L2.4 8.2 L1.6 10z" fill="#8e8f91"/></g><g transform="translate(1520,116.1) scale(1.000)"><path d="M0 10 Q0.5 3.5 6 2.8 Q9 2.6 10.3 4 Q10.8 1 12.5 0.5 Q13.5 1.5 12.2 4 Q12 6 11 7 L11 10 L9.2 10 L9.2 8 Q8.5 8.5 7.6 8.6 L7.6 10 L5.8 10 L5.8 8.4 L4.2 8.4 L4.2 10 L2.4 10 L2.4 8.2 L1.6 10z" fill="#8e8f91"/></g><g transform="translate(1520,134.0) scale(1.000)"><path d="M0 10 Q0.5 3.5 6 2.8 Q9 2.6 10.3 4 Q10.8 1 12.5 0.5 Q13.5 1.5 12.2 4 Q12 6 11 7 L11 10 L9.2 10 L9.2 8 Q8.5 8.5 7.6 8.6 L7.6 10 L5.8 10 L5.8 8.4 L4.2 8.4 L4.2 10 L2.4 10 L2.4 8.2 L1.6 10z" fill="#8e8f91"/></g><g transform="translate(1520,151.3) scale(1.000)"><path d="M0 10 Q0.5 3.5 6 2.8 Q9 2.6 10.3 4 Q10.8 1 12.5 0.5 Q13.5 1.5 12.2 4 Q12 6 11 7 L11 10 L9.2 10 L9.2 8 Q8.5 8.5 7.6 8.6 L7.6 10 L5.8 10 L5.8 8.4 L4.2 8.4 L4.2 10 L2.4 10 L2.4 8.2 L1.6 10z" fill="#8e8f91"/></g><rect x="77.5" y="50" width="1.5" height="498" fill="#3a3b3d"/><path d="M74 185 L74 180 L78.5 176.5 L83 180 L83 185z" stroke="#5a5b5d" stroke-width="1" fill="#2f3032"/><rect x="76.5" y="180.5" width="4" height="1" fill="#6a6b6d"/><path d="M74 239.5 L74 244.5 L78.5 248.0 L83 244.5 L83 239.5z" stroke="#5a5b5d" stroke-width="1" fill="#2f3032"/><rect x="76.5" y="243.0" width="4" height="1" fill="#6a6b6d"/><path d="M74 331 L74 326 L78.5 322.5 L83 326 L83 331z" stroke="#5a5b5d" stroke-width="1" fill="#2f3032"/><rect x="76.5" y="326.5" width="4" height="1" fill="#6a6b6d"/><path d="M74 386.5 L74 391.5 L78.5 395.0 L83 391.5 L83 386.5z" stroke="#5a5b5d" stroke-width="1" fill="#2f3032"/><rect x="76.5" y="390.0" width="4" height="1" fill="#6a6b6d"/><rect x="531.5" y="256" width="1.5" height="19" fill="#c8c8c8"/><path d="M31.5 579.5 L24.5 579.5 L24.5 588.5 L34 588.5 L34 585" stroke="#c0c0c0" stroke-width="1.7" fill="none"/><path d="M27 583 L29.5 586 L35.5 579" stroke="#c0c0c0" stroke-width="1.9" fill="none"/><path d="M25 601 L33 601 M27 599.5 L31 599.5" stroke="#bdbdbd" stroke-width="1.4"/><path d="M25.5 602.5 L32.5 602.5 L32 612 L26 612z" fill="#bdbdbd"/><path d="M24.5 640 L30.5 634" stroke="#bdbdbd" stroke-width="2.4" stroke-linecap="round"/><path d="M35.4 630.7 A3 3 0 1 1 33.3 628.6" stroke="#bdbdbd" stroke-width="2.3" fill="none"/><rect x="1688" y="584" width="10" height="14" fill="#6b9a5a"/><rect x="1691" y="650" width="6" height="127" rx="3" fill="#4e4f51"/><rect x="1688" y="679.5" width="10" height="14" fill="#6b9a5a"/><rect x="1688" y="776" width="10" height="1.5" fill="#5a5b5d"/><rect x="1690" y="778" width="8" height="144" fill="#3b3c3e"/><rect x="1694" y="802" width="4" height="13" fill="#9a9440"/><rect x="1694" y="857" width="4" height="14" fill="#9a9440"/><polygon points="1661.70,792.80 1660.25,794.35 1660.18,796.48 1658.05,796.55 1656.50,798.00 1654.95,796.55 1652.82,796.48 1652.75,794.35 1651.30,792.80 1652.75,791.25 1652.82,789.12 1654.95,789.05 1656.50,787.60 1658.05,789.05 1660.18,789.12 1660.25,791.25" fill="#5a5b5d"/><circle cx="1656.5" cy="792.8" r="1.82" fill="#3c3d3f"/><path d="M1677.5 789 L1685.5 797 M1685.5 789 L1677.5 797" stroke="#5a5b5d" stroke-width="1.3"/><path d="M1677 809 L1681.5 813.5 L1686 809" stroke="#5d5e60" stroke-width="1.3" fill="none"/><path d="M1677 883 L1681.5 887.5 L1686 883" stroke="#5d5e60" stroke-width="1.3" fill="none"/><path d="M1430 826 L1430 834 L1428.5 832.5 Q1427 832 1427.5 834 L1431 839 L1437.5 839 Q1439 836 1438.5 832 L1438.5 830.5 Q1437.5 829.5 1436.5 830.5 Q1436 829 1434.5 829.5 Q1434 828.5 1432.5 829 L1432.5 826 Q1431.5 824.5 1430 826z" fill="#f2f2f2" stroke="#111" stroke-width="0.8"/></svg>
<div class="t" style="left:8px;top:52px;font-size:10px;color:#c4c4c4;transform:translate(-50%,-50%) rotate(-90deg);transform-origin:center">Project</div>
<div class="t" style="left:8px;top:719.5px;font-size:10px;color:#a8a8a8;transform:translate(-50%,-50%) rotate(-90deg);transform-origin:center">Structure</div>
<div class="t" style="left:8px;top:799px;font-size:10px;color:#a8a8a8;transform:translate(-50%,-50%) rotate(-90deg);transform-origin:center">Persistence</div>
<div class="t" style="left:8px;top:879px;font-size:10px;color:#a8a8a8;transform:translate(-50%,-50%) rotate(-90deg);transform-origin:center">Favorites</div>
</body></html>
